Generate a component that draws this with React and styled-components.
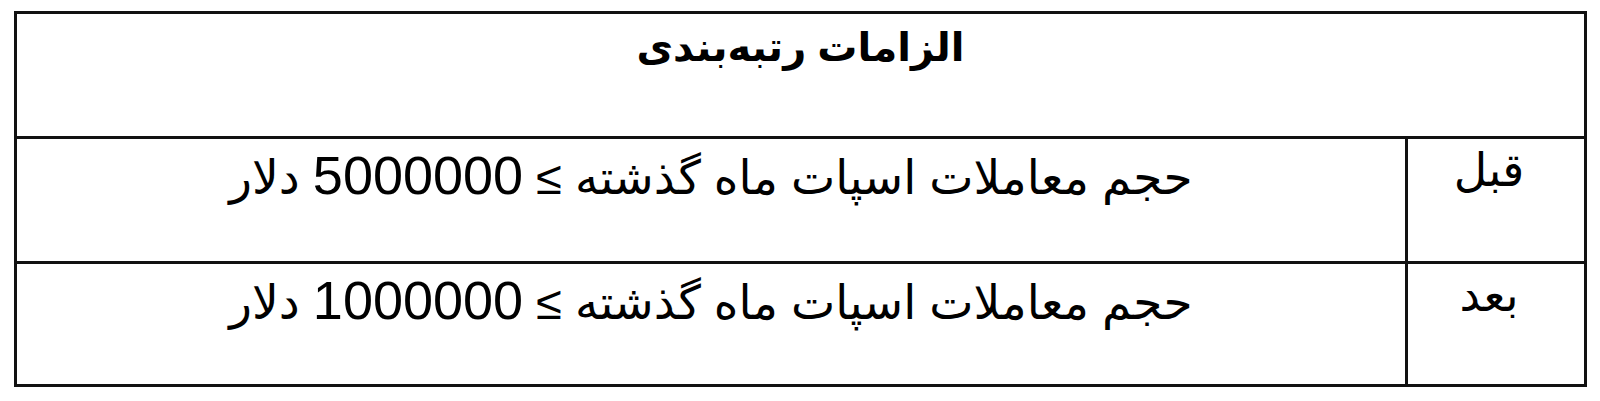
import React from 'react';
import styled, { createGlobalStyle } from 'styled-components';

const GlobalStyle = createGlobalStyle`
  html, body {
    margin: 0;
    padding: 0;
    background: #fff;
  }
`;

const Page = styled.div`
  padding: 11px 13px 0 14px;
  direction: rtl;
  font-family: 'Liberation Sans', 'DejaVu Sans', sans-serif;
  color: #000;
`;

const Table = styled.table`
  width: 1573px;
  border-collapse: collapse;
  border: 3px solid #111;
  table-layout: fixed;
`;

const HeadCell = styled.th`
  height: 113px;
  padding: 9px 0 0;
  vertical-align: top;
  text-align: center;
  font-size: 40px;
  font-weight: 700;
  line-height: 1.2;
  border: 3px solid #111;
`;

const Cell = styled.td`
  height: ${({ $h }) => $h}px;
  padding: ${({ $label }) => ($label ? '0 14px 0 0' : '5px 0 0')};
  vertical-align: top;
  text-align: center;
  font-size: ${({ $label }) => ($label ? '46px' : '47px')};
  line-height: 62px;
  border: 3px solid #111;
`;

const Amount = styled.span`
  font-size: 54px;
`;

const rows = [
  { label: 'قبل', amount: '5000000', h: 117 },
  { label: 'بعد', amount: '1000000', h: 115 },
];

const App = () => (
  <>
    <GlobalStyle />
    <Page>
      <Table>
        <colgroup>
          <col style={{ width: 179 }} />
          <col />
        </colgroup>
        <thead>
          <tr>
            <HeadCell colSpan={2}>الزامات رتبه‌بندی</HeadCell>
          </tr>
        </thead>
        <tbody>
          {rows.map(row => (
            <tr key={row.label}>
              <Cell $label $h={row.h}>{row.label}</Cell>
              <Cell $h={row.h}>
                حجم معاملات اسپات ماه گذشته ≥ <Amount>{row.amount}</Amount> دلار
              </Cell>
            </tr>
          ))}
        </tbody>
      </Table>
    </Page>
  </>
);

export default App;
